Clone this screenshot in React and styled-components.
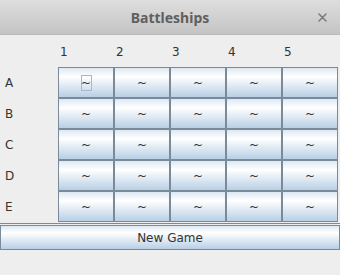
import React from 'react'
import styled, { createGlobalStyle } from 'styled-components'

const GlobalStyle = createGlobalStyle`
  html, body {
    margin: 0;
    padding: 0;
    background: #eeeeee;
  }
  body {
    font-family: "DejaVu Sans", sans-serif;
  }
`

const Window = styled.div`
  width: 340px;
  height: 275px;
  background: #eeeeee;
  display: flex;
  flex-direction: column;
  overflow: hidden;
`

const TitleBar = styled.div`
  height: 35px;
  flex: none;
  position: relative;
  display: flex;
  align-items: center;
  justify-content: center;
  background: linear-gradient(to bottom, #dedede, #c4c4c4);
  border-bottom: 1px solid #b8b8b8;
  box-sizing: border-box;
`

const Title = styled.span`
  font-family: "Noto Sans", "DejaVu Sans", sans-serif;
  font-weight: bold;
  font-size: 14px;
  color: #606060;
`

const Close = styled.svg`
  position: absolute;
  right: 13px;
  top: 13px;
`

const Board = styled.div`
  display: grid;
  grid-template-columns: 58px repeat(5, 56px);
  grid-template-rows: 32px repeat(5, 31px);
`

const ColLabel = styled.div`
  font-size: 12px;
  color: #333;
  display: flex;
  align-items: center;
  padding-left: 2px;
  padding-top: 1px;
`

const RowLabel = styled.div`
  font-size: 12px;
  color: #333;
  display: flex;
  align-items: center;
  padding-left: 5px;
`

const Cell = styled.button`
  margin: 0;
  padding: 0;
  border: 1px solid #7a8a99;
  background: linear-gradient(to bottom, #dde8f3 0%, #ffffff 30%, #b8cfe5 100%);
  font-family: "DejaVu Sans", sans-serif;
  font-size: 12px;
  color: #333;
  display: flex;
  align-items: center;
  justify-content: center;
  box-sizing: border-box;
`

const Mark = styled.span`
  display: inline-flex;
  align-items: center;
  justify-content: center;
  width: 9px;
  height: 14px;
  border: 1px solid ${p => (p.$focused ? '#a8b8c8' : 'transparent')};
`

const Footer = styled.div`
  margin-top: 1px;
  border-top: 1px solid #7a8a99;
  padding-top: 1px;
`

const NewGame = styled.button`
  width: 340px;
  height: 25px;
  margin: 0;
  border: 1px solid #7a8a99;
  background: linear-gradient(to bottom, #dde8f3 0%, #ffffff 30%, #b8cfe5 100%);
  font-family: "DejaVu Sans", sans-serif;
  font-size: 12px;
  color: #333;
  box-sizing: border-box;
`

const rows = ['A', 'B', 'C', 'D', 'E']
const cols = [1, 2, 3, 4, 5]

export default function App() {
  return (
    <>
      <GlobalStyle />
      <Window>
        <TitleBar>
          <Title>Battleships</Title>
          <Close width="9" height="9" viewBox="0 0 9 9">
            <path d="M1 1 L8 8 M8 1 L1 8" stroke="#7a7a7a" strokeWidth="1.5" strokeLinecap="round" />
          </Close>
        </TitleBar>
        <Board>
          <div />
          {cols.map(c => (
            <ColLabel key={c}>{c}</ColLabel>
          ))}
          {rows.map((r, ri) => (
            <React.Fragment key={r}>
              <RowLabel>{r}</RowLabel>
              {cols.map((c, ci) => (
                <Cell key={c}>
                  <Mark $focused={ri === 0 && ci === 0}>~</Mark>
                </Cell>
              ))}
            </React.Fragment>
          ))}
        </Board>
        <Footer>
          <NewGame>New Game</NewGame>
        </Footer>
      </Window>
    </>
  )
}
